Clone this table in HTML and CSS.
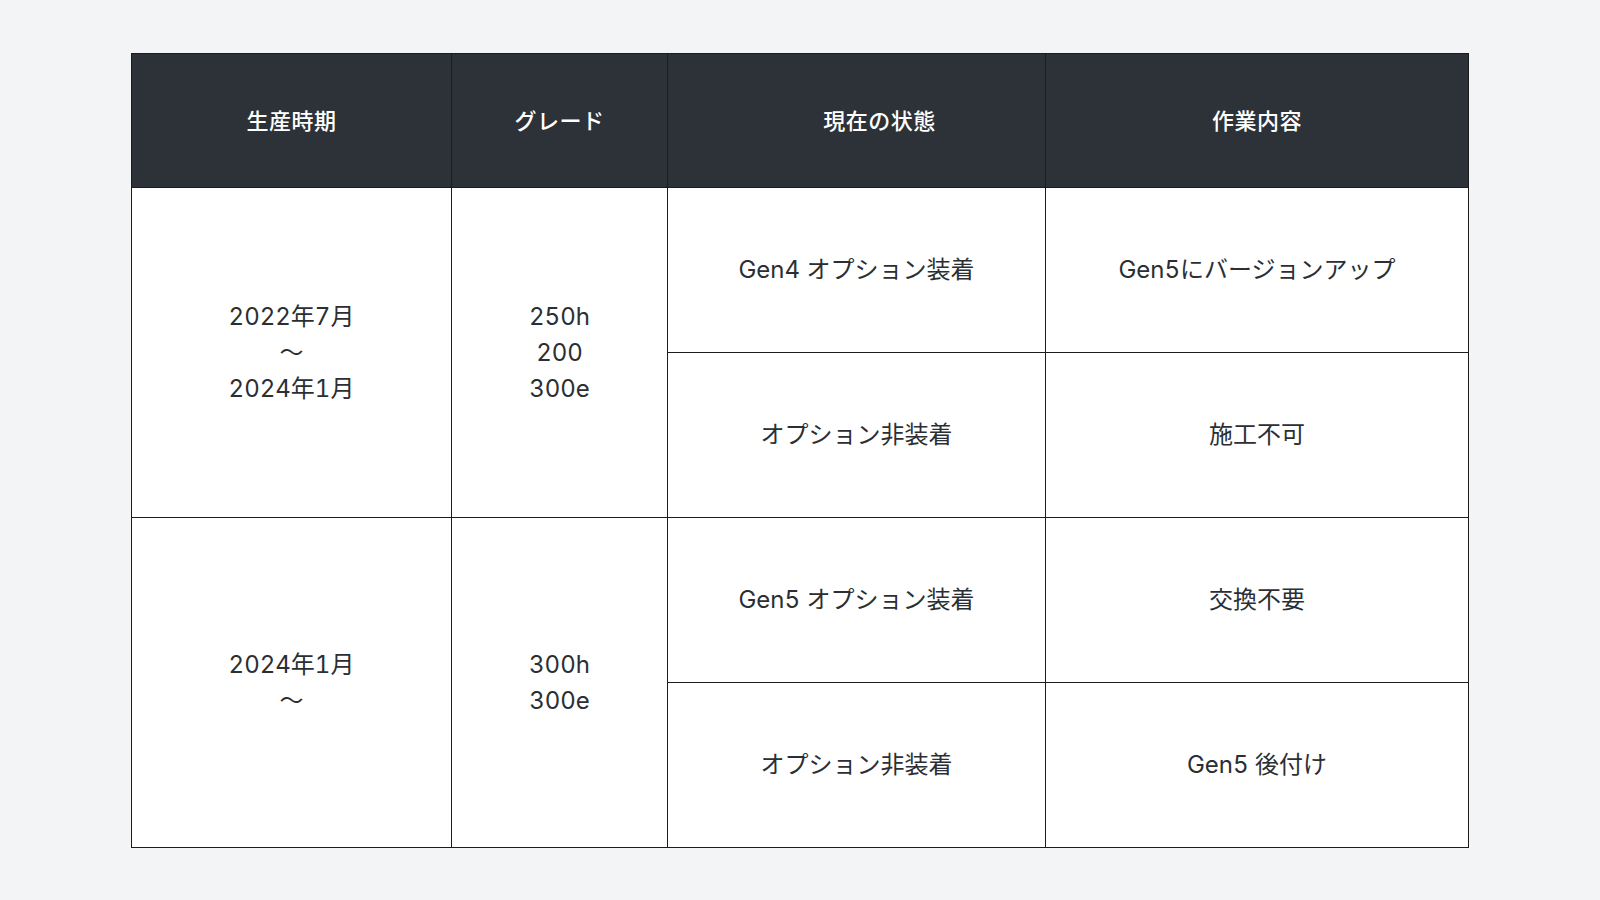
FILE: index.html
```html
<!DOCTYPE html>
<html lang="ja">
<head>
<meta charset="utf-8">
<title>生産時期とグレード別の作業内容</title>
<link rel="stylesheet" href="styles.css">
</head>
<body>
<main class="page">
  <table class="spec-table">
    <colgroup>
      <col class="c-period">
      <col class="c-grade">
      <col class="c-state">
      <col class="c-work">
    </colgroup>
    <thead>
      <tr class="head-row">
        <th>生産時期</th>
        <th>グレード</th>
        <th class="th-shift">現在の状態</th>
        <th>作業内容</th>
      </tr>
    </thead>
    <tbody>
      <tr class="body-row">
        <td rowspan="2">2022年7月<br>〜<br>2024年1月</td>
        <td rowspan="2">250h<br>200<br>300e</td>
        <td>Gen4 オプション装着</td>
        <td>Gen5にバージョンアップ</td>
      </tr>
      <tr class="body-row">
        <td>オプション非装着</td>
        <td>施工不可</td>
      </tr>
      <tr class="body-row">
        <td rowspan="2">2024年1月<br>〜</td>
        <td rowspan="2">300h<br>300e</td>
        <td>Gen5 オプション装着</td>
        <td>交換不要</td>
      </tr>
      <tr class="body-row">
        <td>オプション非装着</td>
        <td>Gen5 後付け</td>
      </tr>
    </tbody>
  </table>
</main>
</body>
</html>
```

FILE: styles.css
```css
html, body {
  margin: 0;
  padding: 0;
}

body {
  background: #f3f4f6;
  font-family: Inter, "Noto Sans CJK JP", sans-serif;
  font-variant-numeric: tabular-nums;
  color: #2b2f33;
}

.page {
  padding-top: 53px;
  display: flex;
  justify-content: center;
}

.spec-table {
  width: 1337px;
  table-layout: fixed;
  border-collapse: collapse;
  background: #ffffff;
  border: 1px solid #1c1c1c;
}

.c-period { width: 320px; }
.c-grade  { width: 216px; }
.c-state  { width: 378px; }
.c-work   { width: 423px; }

.spec-table th,
.spec-table td {
  border: 1px solid #1c1c1c;
  text-align: center;
  vertical-align: middle;
  padding: 0;
}

.head-row th {
  height: 129px;
  background: #2d3238;
  color: #ffffff;
  font-size: 22px;
  font-weight: 500;
  letter-spacing: 0.5px;
  padding-bottom: 4px;
}

.head-row .th-shift {
  padding-left: 46px;
}

.body-row td {
  height: 164px;
  font-size: 24px;
  line-height: 36px;
  letter-spacing: 0;
  font-weight: 400;
}
```
